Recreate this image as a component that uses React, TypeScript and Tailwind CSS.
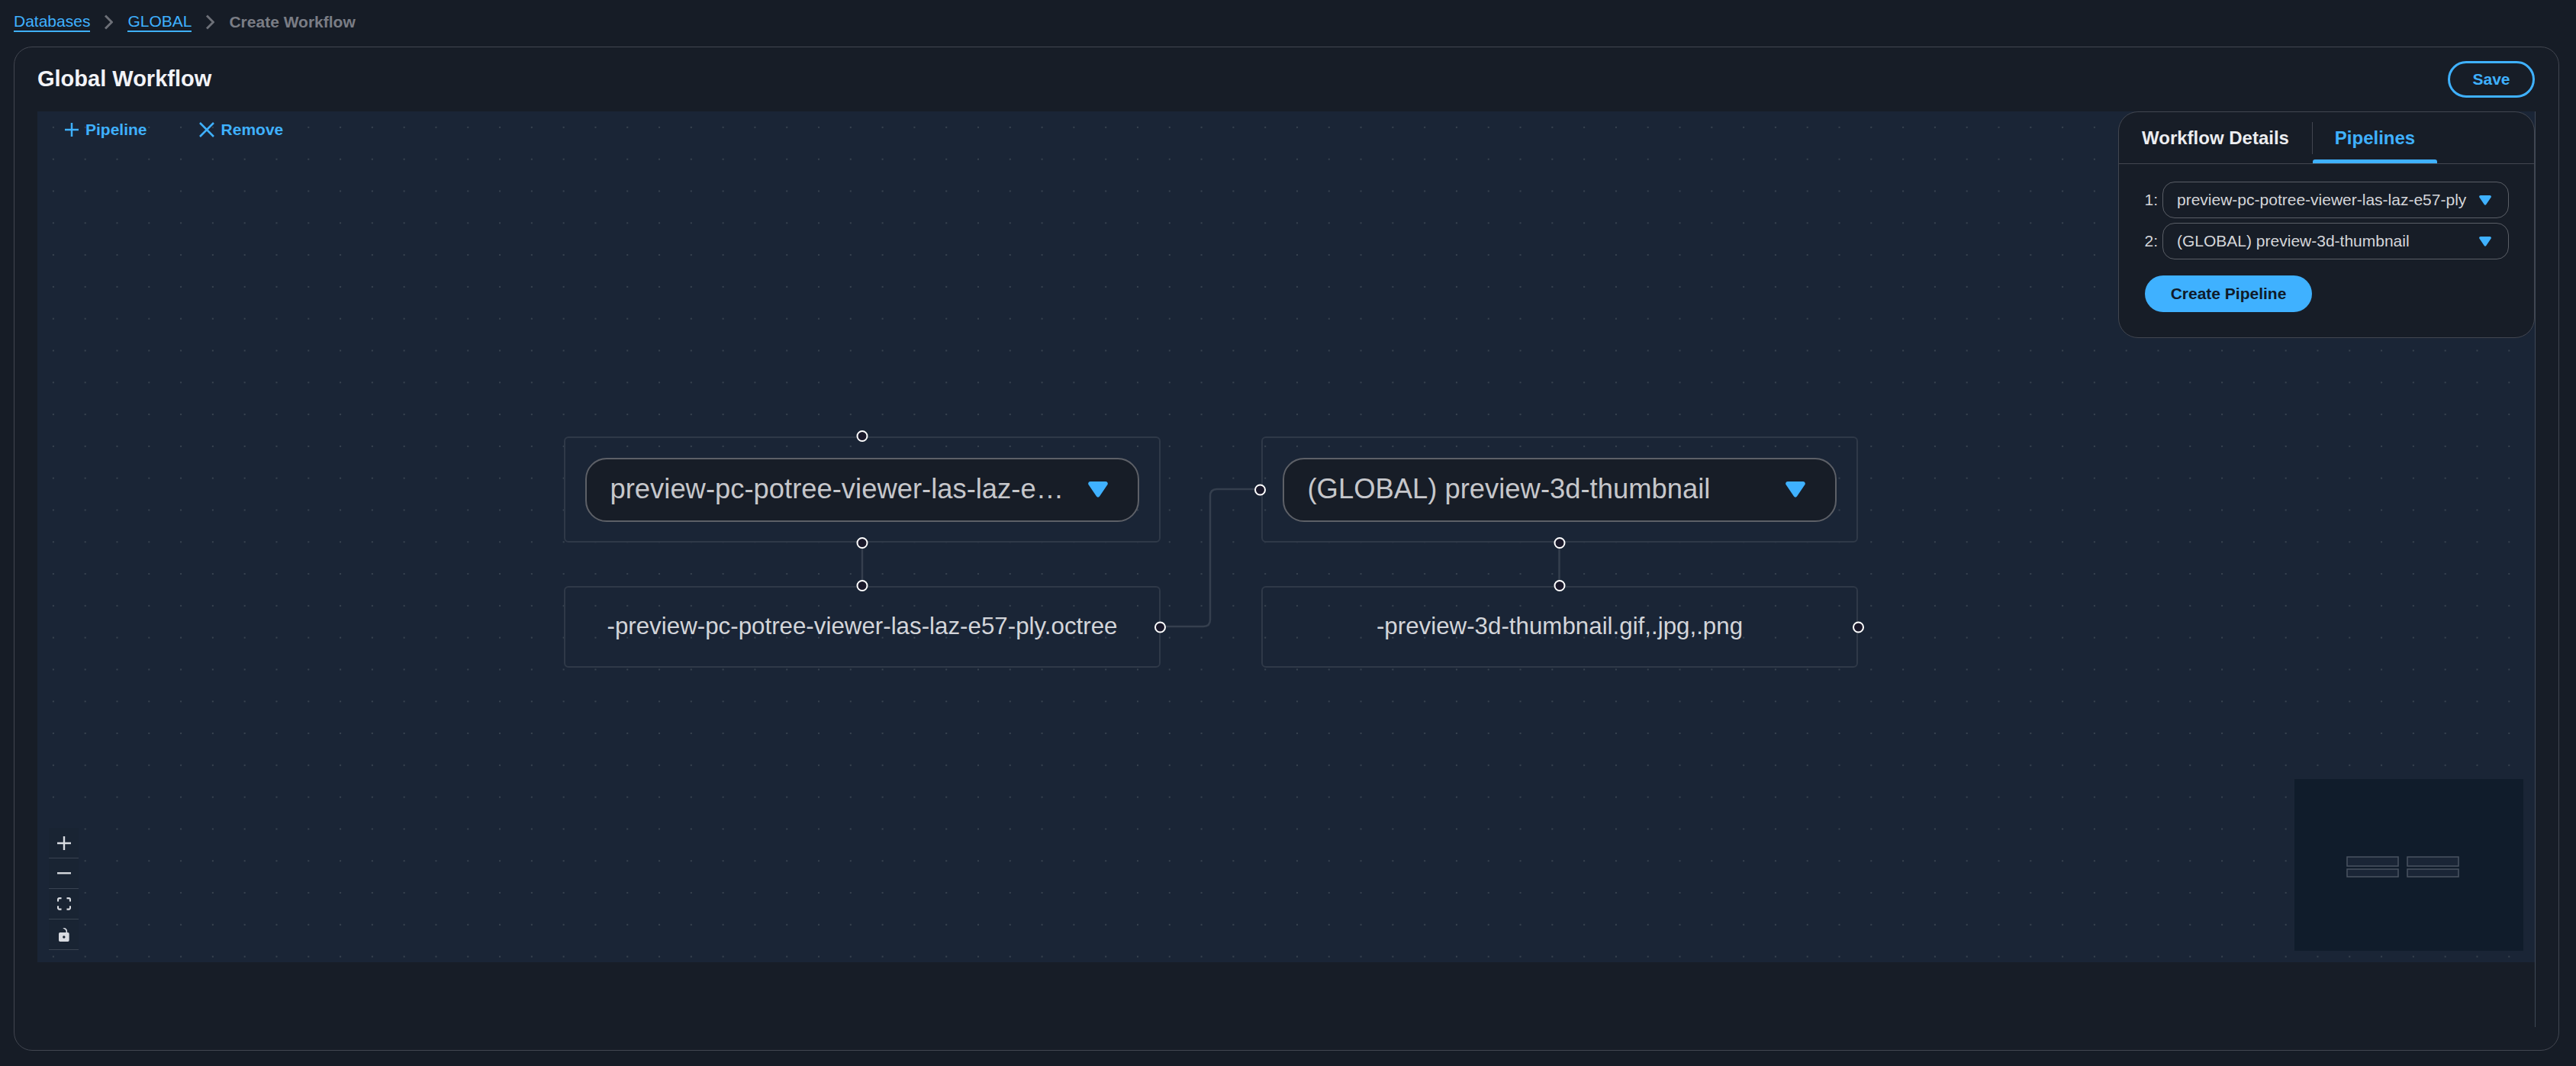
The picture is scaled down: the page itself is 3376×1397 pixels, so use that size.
import type { ReactNode } from "react";

const pipelineNames = ["preview-pc-potree-viewer-las-laz-e57-ply", "(GLOBAL) preview-3d-thumbnail"];

function Chevron() {
  return (
    <svg width="11" height="20" viewBox="0 0 11 20" fill="none" stroke="#6d7078" strokeWidth="3" className="mx-[19px] shrink-0">
      <path d="M1 1.500 9.500 10 1 18.500" />
    </svg>
  );
}

function Caret({ className }: { className: string }) {
  return (
    <svg viewBox="0 0 26 21" fill="#3fb1ff" className={className}>
      <path d="M3 0h20c2 0 3.500 2 2.500 4L15 19.500c-1 1.500-3 1.500-4 0L.5 4C-.5 2 1 0 3 0z" />
    </svg>
  );
}

function Handle({ className }: { className: string }) {
  return <div className={`absolute z-10 h-[15px] w-[15px] rounded-full border-2 border-white bg-[#1a192b] ${className}`} />;
}

function NodeSelect({ label }: { label: string }) {
  return (
    <div className="flex h-[84px] w-[726px] items-center rounded-[28px] border-2 border-[#5d6067] bg-[#171d27] pl-[30.5px] pr-[39px]">
      <span className="min-w-0 flex-1 truncate text-[36.4px] text-[#c6c7cb]">{label}</span>
      <Caret className="ml-[14px] h-[21px] w-[26px] shrink-0" />
    </div>
  );
}

function Node({ className, children }: { className: string; children: ReactNode }) {
  return (
    <div className={`absolute flex items-center justify-center rounded-[6px] border-2 border-[#2f3948] ${className}`}>{children}</div>
  );
}

function ControlButton({ children }: { children: ReactNode }) {
  return <div className="flex h-[40px] w-[39px] items-center justify-center border-b border-[#394351] bg-[#192433]">{children}</div>;
}

function PanelSelect({ index, name }: { index: number; name: string }) {
  return (
    <div className="flex items-center">
      <span className="w-[51px] text-right text-[21px] text-[#d5d6da]">{index}:</span>
      <div className="ml-[6px] flex h-[48px] w-[454px] items-center rounded-[16px] border border-[#5a5e66] pl-[18px] pr-[22px]">
        <span className="min-w-0 flex-1 truncate text-[21px] text-[#d5d6da]">{name}</span>
        <Caret className="ml-[14px] h-[13px] w-[16px] shrink-0" />
      </div>
    </div>
  );
}

export default function App() {
  return (
    <div className="h-screen w-full overflow-hidden bg-[#161c26] [font-family:'Liberation_Sans',sans-serif]">
      <nav className="flex h-[61px] items-center pb-[4px] pl-[18px] text-[21px]">
        <a className="border-b-2 border-[#3fb1ff] leading-[24px] text-[#3fb1ff]">Databases</a>
        <Chevron />
        <a className="border-b-2 border-[#3fb1ff] leading-[24px] text-[#3fb1ff]">GLOBAL</a>
        <Chevron />
        <span className="font-bold text-[#7a7d85]">Create Workflow</span>
      </nav>

      <div className="ml-[18px] h-[1316px] w-[3336px] rounded-[24px] border border-[#424650] bg-[#171d27] pb-[30px] pl-[30px] pr-[30px]">
        <div className="flex h-[84px] items-center justify-between">
          <h1 className="text-[29px] font-bold text-[#f2f3f7]">Global Workflow</h1>
          <button className="mr-[1px] h-[48px] w-[114px] rounded-full border-[3px] border-[#3fb1ff] text-[21px] font-bold text-[#3fb1ff]">Save</button>
        </div>

        <div className="h-[1200px] border-r border-[#3f4856]">
          <div className="relative h-[1115px] bg-[#1a2536] bg-[radial-gradient(circle,#37424f_1px,transparent_1.3px)] bg-[size:41.8px_41.8px]">
            <div className="absolute left-[36px] top-[12px] flex h-[24px] items-center text-[21px] font-bold text-[#3fb1ff]">
              <svg width="18" height="18" viewBox="0 0 18 18" stroke="currentColor" strokeWidth="2.500" className="mr-[9px]">
                <path d="M9 0v18M0 9h18" />
              </svg>
              <span>Pipeline</span>
              <svg width="20" height="20" viewBox="0 0 20 20" stroke="currentColor" strokeWidth="2.500" className="ml-[68px] mr-[9px]">
                <path d="M1 1l18 18M19 1 1 19" />
              </svg>
              <span>Remove</span>
            </div>

            <svg className="absolute inset-0 h-full w-full" fill="none" stroke="#353f4e" strokeWidth="2.500">
              <path d="M1081 565v56M1994.500 565v56" />
              <path d="M1472 675h56q9 0 9-9V504q0-9 9-9h56" />
            </svg>

            <Node className="left-[690px] top-[426px] h-[139px] w-[782px]">
              <Handle className="left-1/2 top-[-10px] -translate-x-1/2" />
              <NodeSelect label="preview-pc-potree-viewer-las-laz-e57-ply" />
              <Handle className="bottom-[-10px] left-1/2 -translate-x-1/2" />
            </Node>
            <Node className="left-[690px] top-[622px] h-[107px] w-[782px]">
              <Handle className="left-1/2 top-[-10px] -translate-x-1/2" />
              <span className="text-[31.3px] text-[#d3d5da]">-preview-pc-potree-viewer-las-laz-e57-ply.octree</span>
              <Handle className="right-[-9px] top-1/2 -translate-y-1/2" />
            </Node>
            <Node className="left-[1604px] top-[426px] h-[139px] w-[782px]">
              <Handle className="left-[-11px] top-1/2 -translate-y-1/2" />
              <NodeSelect label="(GLOBAL) preview-3d-thumbnail" />
              <Handle className="bottom-[-10px] left-1/2 -translate-x-1/2" />
            </Node>
            <Node className="left-[1604px] top-[622px] h-[107px] w-[782px]">
              <Handle className="left-1/2 top-[-10px] -translate-x-1/2" />
              <span className="text-[31.3px] text-[#d3d5da]">-preview-3d-thumbnail.gif,.jpg,.png</span>
              <Handle className="right-[-10px] top-1/2 -translate-y-1/2" />
            </Node>

            <div className="absolute left-[15px] top-[939px] flex flex-col">
              <ControlButton>
                <svg viewBox="0 0 32 32" fill="#d8dbe1" className="h-[18px] w-[18px]">
                  <path d="M32 18.133H18.133V32h-4.266V18.133H0v-4.266h13.867V0h4.266v13.867H32z" />
                </svg>
              </ControlButton>
              <ControlButton>
                <svg viewBox="0 0 32 5" fill="#d8dbe1" className="h-[3px] w-[18px]">
                  <path d="M0 0h32v4.200H0z" />
                </svg>
              </ControlButton>
              <ControlButton>
                <svg viewBox="0 0 32 30" fill="#d8dbe1" className="h-[17px] w-[18px]">
                  <path d="M3.692 4.630c0-.530.400-.938.939-.938h5.215V0H4.708C2.130 0 0 2.054 0 4.630v5.216h3.692V4.631zM27.354 0h-5.200v3.692h5.170c.530 0 .984.400.984.939v5.215H32V4.631A4.624 4.624 0 0027.354 0zm.954 24.830c0 .532-.400.940-.939.940h-5.215v3.768h5.215c2.577 0 4.631-2.130 4.631-4.707v-5.139h-3.692v5.139zm-23.677.940c-.531 0-.939-.400-.939-.940v-5.138H0v5.139c0 2.577 2.130 4.707 4.708 4.707h5.138V25.770H4.631z" />
                </svg>
              </ControlButton>
              <ControlButton>
                <svg viewBox="0 0 25 32" fill="#d8dbe1" className="h-[18px] w-[14px]">
                  <path d="M21.333 10.667H19.810V7.619C19.810 3.429 16.380 0 12.190 0c-4.114 1.828-1.370 2.133.305 2.438 1.676.305 4.420 2.590 4.420 5.181v3.048H3.047A3.056 3.056 0 000 13.714v15.238A3.056 3.056 0 003.048 32h18.285a3.056 3.056 0 003.048-3.048V13.714a3.056 3.056 0 00-3.048-3.047zM12.190 24.533a3.056 3.056 0 01-3.047-3.047 3.056 3.056 0 013.047-3.048 3.056 3.056 0 013.048 3.048 3.056 3.056 0 01-3.048 3.047z" />
                </svg>
              </ControlButton>
            </div>

            <svg width="300" height="225" className="absolute left-[2958px] top-[875px] bg-[#101c2b]" fill="#1a2536" stroke="#4a5362" strokeWidth="1.500">
              <rect x="69" y="102" width="67" height="12" />
              <rect x="69" y="118" width="67" height="10" />
              <rect x="148" y="102" width="67" height="12" />
              <rect x="148" y="118" width="67" height="10" />
            </svg>

            <div className="absolute right-0 top-0 h-[297px] w-[546px] rounded-[26px] border border-[#424650] bg-[#171d27]">
              <div className="flex h-[68px] items-end border-b border-[#424650]">
                <div className="flex h-[54px] w-[253px] items-center pb-[12px] pl-[30px] text-[24px] font-bold text-[#ecedf0]">Workflow Details</div>
                <div className="mb-[12px] h-[42px] w-px bg-[#424650]" />
                <div className="flex h-[54px] w-[163px] flex-col text-[24px] font-bold text-[#3fb1ff]">
                  <span className="flex flex-1 items-center justify-center pb-[7px]">Pipelines</span>
                  <span className="h-[5px] rounded-t-[3px] bg-[#3fb1ff]" />
                </div>
              </div>
              <div className="mt-[23px] flex flex-col gap-[6px]">
                {pipelineNames.map((name, i) => (
                  <PanelSelect key={name} index={i + 1} name={name} />
                ))}
              </div>
              <button className="ml-[34px] mt-[21px] h-[48px] w-[219px] rounded-full bg-[#3fb1ff] text-[21px] font-bold text-[#0f1b2a]">Create Pipeline</button>
            </div>
          </div>
        </div>
      </div>
    </div>
  );
}
